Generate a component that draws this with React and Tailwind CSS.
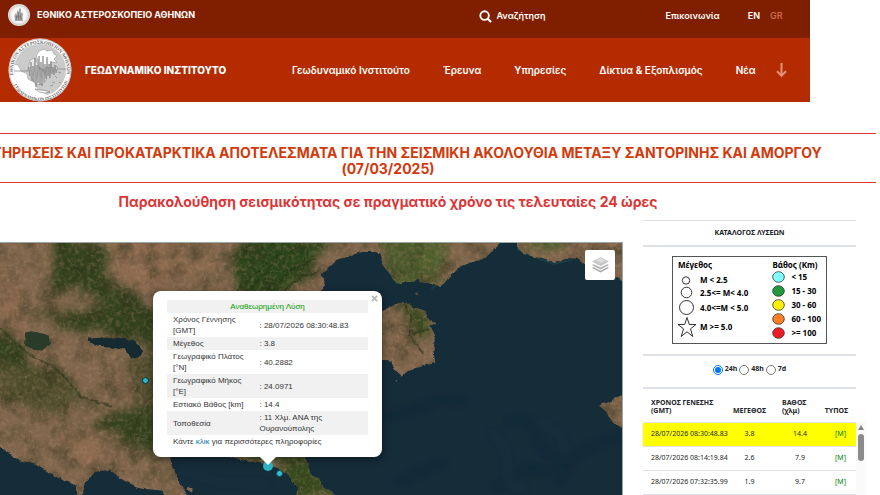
import { useState } from 'react';

const NAV = ['Γεωδυναμικό Ινστιτούτο', 'Έρευνα', 'Υπηρεσίες', 'Δίκτυα & Εξοπλισμός', 'Νέα'];

const SOLUTION = [
  ['Χρόνος Γέννησης [GMT]', '28/07/2026 08:30:48.83'],
  ['Μέγεθος', '3.8'],
  ['Γεωγραφικό Πλάτος [°N]', '40.2882'],
  ['Γεωγραφικό Μήκος [°E]', '24.0971'],
  ['Εστιακό Βάθος [km]', '14.4'],
  ['Τοποθεσία', '11 Χλμ. ΑΝΑ της Ουρανούπολης'],
];

const EVENTS = [
  { time: '28/07/2026 08:30:48.83', mag: '3.8', depth: '14.4' },
  { time: '28/07/2026 08:14:19.84', mag: '2.6', depth: '7.9' },
  { time: '28/07/2026 07:32:35.99', mag: '1.9', depth: '9.7' },
];

const DEPTHS = [
  ['#80ffff', '< 15'],
  ['#1f9a3d', '15 - 30'],
  ['#fff200', '30 - 60'],
  ['#ff7f27', '60 - 100'],
  ['#ed1c24', '>= 100'],
];

function Seal({ className }) {
  return (
    <svg viewBox="0 0 64 64" className={className} aria-hidden="true">
      <circle cx="32" cy="32" r="31.5" fill="#fff" />
      <circle cx="32" cy="32" r="31" fill="none" stroke="#999" strokeWidth="0.6" />
      <clipPath id="disc"><circle cx="32" cy="32" r="26" /></clipPath>
      <circle cx="32" cy="32" r="26" fill="#cbcbcb" />
      <g clipPath="url(#disc)">
        <path d="M4 26l6 1 3 6 6 3 1 5 6 3 4 7 7 4 6 6-8 4H4z" fill="#fff" stroke="#999" strokeWidth="0.5" />
        <path d="M31 13l5-2 3 2 5-1 2 4 3 2-3 3 3 4-5-1-3 3 2 3-5-1-2 3-4-2-3-4 1-4-2-4z" fill="#fff" stroke="#888" strokeWidth="0.5" />
        <path d="M22 22l4-2 3 4 2 6 5 4 3 6-3 5-5 2-5-3-4-7-2-7z" fill="#e8e8e8" stroke="#888" strokeWidth="0.5" />
        <path d="M27 51l5 1 5 .5 5 1.500-5 1-6-1zM47 38l2 2M44 44l3 1M51 44l2 1M48 28l2 2M50 34l3 1M42 48l3-1" fill="#fff" stroke="#777" strokeWidth="0.6" />
        <path d="M5 33h15l1-4 1 9 1-14 1 19 1-15 1 16 1-24 1 29 1-22 1 18 1-27 1 29 1-23 1 24 1-30 1 26 1-18 1 15 1-22 1 19 1-12 1 14 1-17 1 13 1-7 1 8 1-10 1 8 1-4h13" fill="none" stroke="#808080" strokeWidth="0.7" />
      </g>
      <path id="ringTop" d="M6 40A27 27 0 1 1 58 40" fill="none" />
      <path id="ringBottom" d="M4 43A29.800 29.800 0 0 0 60 43" fill="none" />
      <g fontFamily="Liberation Serif, serif" fontWeight="bold" fill="#666">
        <text fontSize="4.800">
          <textPath href="#ringTop" startOffset="3%">ΕΘΝΙΚΟΝ ΑΣΤΕΡΟΣΚΟΠΕΙΟΝ ΑΘΗΝΩΝ</textPath>
        </text>
        <text fontSize="4.300">
          <textPath href="#ringBottom" startOffset="6%">ΓΕΩΔΥΝΑΜΙΚΟΝ ΙΝΣΤΙΤΟΥΤΟΝ</textPath>
        </text>
      </g>
    </svg>
  );
}

function SmallSeal() {
  return (
    <svg viewBox="0 0 22 22" className="size-[22px]" aria-hidden="true">
      <circle cx="11" cy="11" r="11" fill="#e9e9e9" />
      <circle cx="11" cy="11" r="9.800" fill="none" stroke="#bdbdbd" strokeWidth="1.200" strokeDasharray="1 0.7" />
      <circle cx="11" cy="11" r="8.200" fill="#fafafa" stroke="#ccc" strokeWidth="0.4" />
      <path d="M7 17l-.5-5 1-3 1 2 .5-4 1-1 .5 3 1-5 1.500 1v4l1-1 1 2-.5 3 .5 4z" fill="#a5a5a5" />
      <path d="M8 16l1-5M10.500 16V8M13 16l-.5-6M7.500 13h6" stroke="#666" strokeWidth="0.6" fill="none" />
    </svg>
  );
}

function Header() {
  return (
    <header className="mr-[8%] shrink-0 text-white">
      <div className="flex h-[38px] items-start bg-[#801e00] pr-[27px] pl-2 text-[9px] font-semibold">
        <a href="#noa" className="mt-1 flex items-center gap-[7px] font-bold">
          <SmallSeal />
          ΕΘΝΙΚΟ ΑΣΤΕΡΟΣΚΟΠΕΙΟ ΑΘΗΝΩΝ
        </a>
        <div className="ml-auto flex h-8 items-center">
          <button className="mr-[120px] flex items-center gap-1">
            <svg viewBox="0 0 14 14" className="size-[13px]" fill="none" stroke="#fff" strokeWidth="2">
              <circle cx="6" cy="6" r="4.600" />
              <path d="M9.400 9.400l3.600 3.600" strokeWidth="2.400" />
            </svg>
            Αναζήτηση
          </button>
          <a href="#contact" className="mr-7">Επικοινωνία</a>
          <a href="#en" className="mr-[10px]">EN</a>
          <a href="#gr" className="text-[#c96a4c]">GR</a>
        </div>
      </div>
      <div className="flex h-16 items-center bg-[#b42b00] pr-[23px] pl-2">
        <Seal className="size-16 shrink-0" />
        <a href="#gein" className="ml-[13px] text-[10px] font-extrabold whitespace-nowrap">ΓΕΩΔΥΝΑΜΙΚΟ ΙΝΣΤΙΤΟΥΤΟ</a>
        <nav className="ml-auto flex gap-[33px] text-[10px] font-semibold whitespace-nowrap">
          {NAV.map((item) => (
            <a key={item} href="#nav">{item}</a>
          ))}
        </nav>
        <button aria-label="Περισσότερα" className="ml-5">
          <svg viewBox="0 0 11 14" className="h-[14px] w-[11px]" fill="none" stroke="#e29479" strokeWidth="2">
            <path d="M5.500 0v12.500M1 8.300l4.500 4.500L10 8.300" />
          </svg>
        </button>
      </div>
    </header>
  );
}

function Terrain() {
  return (
    <svg viewBox="0 0 623 253" preserveAspectRatio="xMinYMin slice" className="block h-full w-full" aria-hidden="true">
      <defs>
        <filter id="coast" filterUnits="userSpaceOnUse" x="-20" y="-20" width="663" height="293">
          <feTurbulence type="fractalNoise" baseFrequency="0.12" numOctaves="3" seed="4" />
          <feDisplacementMap in="SourceGraphic" scale="5" xChannelSelector="R" yChannelSelector="G" />
        </filter>
        <filter id="soft" filterUnits="userSpaceOnUse" x="-20" y="-20" width="663" height="293" colorInterpolationFilters="sRGB">
          <feTurbulence type="fractalNoise" baseFrequency="0.045" numOctaves="4" seed="9" result="n" />
          <feDisplacementMap in="SourceGraphic" in2="n" scale="36" xChannelSelector="R" yChannelSelector="G" result="d" />
          <feGaussianBlur in="d" stdDeviation="5" />
        </filter>
        <filter id="relief" x="0" y="0" width="100%" height="100%" colorInterpolationFilters="sRGB">
          <feTurbulence type="fractalNoise" baseFrequency="0.05" numOctaves="5" seed="21" />
          <feColorMatrix values="0 0 0 0 0.16  0 0 0 0 0.18  0 0 0 0 0.09  2 0 0 0 -0.85" />
        </filter>
        <filter id="grain" x="0" y="0" width="100%" height="100%" colorInterpolationFilters="sRGB">
          <feTurbulence type="fractalNoise" baseFrequency="0.25" numOctaves="3" seed="5" />
          <feColorMatrix values="0 0 0 0 0.72  0 0 0 0 0.58  0 0 0 0 0.44  0 1.6 0 0 -0.7" />
        </filter>
        <filter id="swell" x="-10%" y="-10%" width="120%" height="120%">
          <feGaussianBlur stdDeviation="3" />
        </filter>
        <clipPath id="land">
          <path d="M-16 -16H300H500L500 1 492 10 487 15 470 20 460 24 450 33 441 44 432 41 420 37 408 38 398 41 393 34 383 20 380 9 362 9 345 14 337 17 330 23 322 33 326 41 320 50 320 150 172 150 170 218 178 237 188 253V268H166L163 248 150 247 137 244 124 238 110 227 95 229 84 243 82 268H78L76 243 62 237 48 229 36 221 18 217 5 207 0 203 -16 190Z" />
          <path d="M517 -16H640V48L623 38 607 30 592 27 580 16 571 15 555 19 540 14 524 10 518 5Z" />
          <path d="M370 73l12-5 9-4 13-6 9 6 11 3 5 9 8 4-6 3 5 10-2 15 2 12-11 3-15 4-8 6-7-7-3-8-22-2Z" />
          <path d="M600 163l8-3 8-5 24-7v43l-17-7-9-4-6-10Z" />
          <path d="M215 206H303l3 10 6 14 10 12 15 11 5 15H291l5-15 1-7-5-10-12-10-14-4-10-4-12 0-12-4Z" />
          <path d="M416 50l4 1-1 2-3-1zM396 136l2 1-1 1zM189 244l4 2-1 4-4-2z" />
        </clipPath>
      </defs>
      <rect width="623" height="253" fill="#152c39" />
      <g filter="url(#swell)" fill="none" stroke="#0c2236" strokeWidth="4" opacity="0.45">
        <path d="M385 174l30-7 26-10 24 2M400 240l26-14 20-6M496 246l30-20 24 2 20-12M560 240l14-26 22-12 27-8M508 180q24-10 30 14t26 18" />
        <path d="M490 190q20 10 18 34t18 20M540 180q24 6 26 30M180 228l40 12 50 2" stroke="#1b3646" />
      </g>
      <path d="M383 20l15 21M432 46l28-22 27-12 14-12M518 6l22 10 15 5 18-4" fill="none" stroke="#1c5052" strokeWidth="2" opacity="0.5" />
      <g filter="url(#coast)">
        <g clipPath="url(#land)">
          <rect x="-20" y="-20" width="663" height="293" fill="#80664d" />
          <g filter="url(#soft)">
            <path d="M50 -10L95 0 112 30 108 52 78 56 55 40ZM100 40L150 60 165 110 120 95 70 88 55 76 95 65ZM-10 95L20 100 60 130 95 155 60 160 20 140 -10 125ZM95 170L155 155 170 215 125 205 90 185Z" fill="#33421f" />
            <path d="M0 120L50 128 80 155 70 170 40 168 0 155ZM125 120L165 100 165 160 135 155ZM140 10L190 6 200 18 150 24ZM20 60L80 75 50 80Z" fill="#524f2f" />
            <path d="M245 -10H345L320 16 295 50H236L238 25ZM290 -10H325V18Z" fill="#2c451d" />
            <path d="M378 -10H450L442 40 396 42 380 20ZM525 -10H560V10L530 12Z" fill="#50602f" />
            <path d="M400 60L425 68 432 92 412 98 404 84ZM230 205H310L345 260H296L270 220Z" fill="#384b1f" />
            <path d="M0 20L24 50 20 90 0 80ZM60 190L100 195 110 220 80 225ZM95 0L180 0 220 30 150 45 110 20Z" fill="#8d6b50" />
          </g>
          <g fill="none" stroke="#1b2e13" strokeWidth="2" opacity="0.5">
            <path d="M232 52l34-30 8-18M246 50l24-24 10-16M262 52l34-28 22-8M280 52l22-18 18-6M0 86l28 24 30 18 24 26 30 10M404 60l8 14-2 18 14 18M412 92l18-6" />
          </g>
          <rect x="-20" y="-20" width="663" height="293" filter="url(#relief)" opacity="0.6" />
          <rect x="-20" y="-20" width="663" height="293" filter="url(#grain)" opacity="0.5" />
        </g>
      </g>
      <g filter="url(#coast)">
        <path d="M25 91l10-2 15 4 1 8-8 7-10-2-9-5Z" fill="#2b3b2b" />
        <path d="M88 95l12-1 12 3 12-2 10 3 10 11-2 4-12 3-4-9-12-3-16-1-9-4Z" fill="#142a31" />
      </g>
    </svg>
  );
}

function Popup() {
  return (
    <div className="absolute top-12 left-[153px] w-[229px] rounded-lg bg-white px-[14px] py-[9px] text-[8px] leading-[11px] text-[#333] shadow-[0_2px_8px_rgba(0,0,0,0.45)]">
      <button aria-label="Κλείσιμο" className="absolute top-1 right-1">
        <svg viewBox="0 0 8 8" className="size-[7px]" stroke="#b8b8b8" strokeWidth="2">
          <path d="M1 1l6 6M7 1L1 7" />
        </svg>
      </button>
      <table className="w-full table-fixed">
        <colgroup>
          <col className="w-[43%]" />
          <col />
        </colgroup>
        <tbody>
          <tr className="bg-[#f1f1f1]">
            <th colSpan={2} className="px-[6px] py-px text-center font-normal text-[#009900]">Αναθεωρημένη Λύση</th>
          </tr>
          {SOLUTION.map(([label, value]) => (
            <tr key={label} className="even:bg-white odd:bg-[#f1f1f1]">
              <td className="py-px pl-[6px]">{label}</td>
              <td className="py-px pl-[6px] pr-1">: {value}</td>
            </tr>
          ))}
          <tr>
            <td colSpan={2} className="px-[6px] py-px">
              Κάντε <a href="#solution" className="text-[#0078a8]">κλικ</a> για περισσότερες πληροφορίες
            </td>
          </tr>
        </tbody>
      </table>
      <svg viewBox="0 0 16 8" className="absolute top-full left-1/2 h-2 w-4 -translate-x-1/2" aria-hidden="true">
        <path d="M0 0h16L8 8z" fill="#fff" />
      </svg>
    </div>
  );
}

function MapView() {
  return (
    <div className="relative mt-[22px] min-w-0 flex-1 overflow-hidden border-t border-r border-[#9aa5a5] font-['Liberation_Sans',Arial,sans-serif]">
      <Terrain />
      <span className="absolute top-[134px] left-[142px] size-[7px] rounded-full border border-[#0b2a38] bg-[#2fb9cb]" />
      <span className="absolute top-[218px] left-[263px] size-[10px] rounded-full bg-[#2fb4c4]" />
      <span className="absolute top-[227px] left-[276px] size-[7px] rounded-full border border-[#16495a] bg-[#2fc2d2]" />
      <Popup />
      <button aria-label="Επίπεδα" className="absolute top-[7px] right-[7px] flex size-[30px] items-center justify-center rounded-xs bg-white">
        <svg viewBox="0 0 20 19" className="h-[18px] w-[19px]">
          <path d="M1 12.500L10 8l9 4.500-9 5z" fill="#a6a6a6" />
          <path d="M1 10.800L10 6l9 4.800-9 4.800z" fill="#fff" />
          <path d="M1 9.500L10 5l9 4.500-9 4.800z" fill="#adadad" />
          <path d="M1 7.800L10 3l9 4.800-9 4.300z" fill="#fff" />
          <path d="M1 5.800L10 1l9 4.800-9 4.900z" fill="#c8c8c8" />
          <path d="M5 4.500L10 2l5 2.500-5 2.500z" fill="#dedede" />
        </svg>
      </button>
    </div>
  );
}

function Legend() {
  return (
    <div className="mx-auto flex h-[88px] w-[155px] justify-between border border-[#555] px-[5px] pt-[3px] text-[8px] leading-[10px] font-bold text-black">
      <div>
        <div>Μέγεθος</div>
        <ul className="grid grid-cols-[18px_auto] items-center gap-x-1 pt-1">
          <li className="contents">
            <svg viewBox="0 0 18 12" className="h-3 w-[18px]" fill="none" stroke="#333"><circle cx="8" cy="6.500" r="3.700" /></svg>
            <span>M &lt; 2.5</span>
          </li>
          <li className="contents">
            <svg viewBox="0 0 18 13" className="h-[13px] w-[18px]" fill="none" stroke="#333"><circle cx="8.500" cy="6.500" r="5.300" /></svg>
            <span>2.5&lt;= M&lt; 4.0</span>
          </li>
          <li className="contents">
            <svg viewBox="0 0 18 17" className="h-[17px] w-[18px]" fill="none" stroke="#333"><circle cx="8.500" cy="8.500" r="7" /></svg>
            <span>4.0&lt;=M &lt; 5.0</span>
          </li>
          <li className="contents">
            <svg viewBox="0 0 18 22" className="h-[22px] w-[18px]" fill="none" stroke="#333"><path d="M9 1.500l2.300 7H18l-5.500 4.300 2.300 7.700L9 15.800 3.200 20.500l2.300-7.700L0 8.500h6.700z" /></svg>
            <span>M &gt;= 5.0</span>
          </li>
        </ul>
      </div>
      <div>
        <div>Βάθος (Km)</div>
        <ul>
          {DEPTHS.map(([color, label]) => (
            <li key={label} className="flex h-[14px] items-center gap-[6px]">
              <svg viewBox="0 0 13 12" className="h-3 w-[13px]"><ellipse cx="6.500" cy="6" rx="5.800" ry="5.300" fill={color} stroke="#333" strokeWidth="0.8" /></svg>
              {label}
            </li>
          ))}
        </ul>
      </div>
    </div>
  );
}

function Sidebar() {
  const [range, setRange] = useState('24h');
  return (
    <aside className="flex w-[223px] shrink-0 flex-col font-['Noto_Sans','Open_Sans',sans-serif] text-[7px] text-[#212529]">
      <div className="mr-[10px] border-t border-[#dee2e6]">
        <h3 className="flex h-6 items-center justify-center font-bold">ΚΑΤΑΛΟΓΟΣ ΛΥΣΕΩΝ</h3>
        <div className="border-y-2 border-[#dee2e6] pt-[9px] pb-[10px]">
          <Legend />
        </div>
        <fieldset className="flex h-[31px] items-center justify-center gap-[2px] pb-1 font-bold">
          {['24h', '48h', '7d'].map((r) => (
            <label key={r} className="flex items-center gap-[2px]">
              <input type="radio" name="range" checked={range === r} onChange={() => setRange(r)} className="size-[10px]" />
              {r}
            </label>
          ))}
        </fieldset>
      </div>
      <div className="flex min-h-0 flex-1">
        <div className="min-w-0 flex-1">
          <table className="w-full table-fixed">
            <thead>
              <tr className="h-[34px] border-t-2 border-b border-[#dee2e6] text-left align-bottom leading-[8px]">
                <th className="w-[82px] pb-[7px] pl-2">ΧΡΟΝΟΣ ΓΕΝΕΣΗΣ (GMT)</th>
                <th className="w-[49px] pb-[7px] text-center">ΜΕΓΕΘΟΣ</th>
                <th className="w-[44px] pr-1 pb-[7px] pl-2">ΒΑΘΟΣ (χλμ)</th>
                <th className="pr-2 pb-[7px] text-right">ΤΥΠΟΣ</th>
              </tr>
            </thead>
            <tbody>
              {EVENTS.map((e, i) => (
                <tr key={e.time} className={`h-6 border-b border-[#dee2e6] whitespace-nowrap ${i === 0 ? 'bg-[#ffff00]' : 'bg-white'}`}>
                  <td className="pl-2">{e.time}</td>
                  <td className="text-center">{e.mag}</td>
                  <td className="pl-2 text-center">{e.depth}</td>
                  <td className="pr-[10px] text-right"><a href="#type" className="text-[#008000]">[M]</a></td>
                </tr>
              ))}
            </tbody>
          </table>
        </div>
        <div className="mt-[34px] flex w-[10px] flex-col items-center bg-[#fafafa] pt-1">
          <svg viewBox="0 0 6 5" className="h-[5px] w-[6px]"><path d="M3 0l3 5H0z" fill="#858585" /></svg>
          <div className="mt-1 h-[27px] w-[6px] rounded-full bg-[#8b8b8b]" />
        </div>
      </div>
    </aside>
  );
}

export default function App() {
  return (
    <div className="flex h-screen flex-col overflow-hidden bg-white font-['Inter','Open_Sans',sans-serif]">
      <Header />
      <main className="mr-1 flex min-h-0 flex-1 flex-col">
        <h1 className="mt-[31px] -ml-[100px] border-t border-b border-t-[#dd3333] border-b-[#dd3333] px-10 pt-[11px] pb-[5px] text-center text-[14px] leading-4 font-bold text-[#d23a0c]">
          ΠΑΡΑΤΗΡΗΣΕΙΣ ΚΑΙ ΠΡΟΚΑΤΑΡΚΤΙΚΑ ΑΠΟΤΕΛΕΣΜΑΤΑ ΓΙΑ ΤΗΝ ΣΕΙΣΜΙΚΗ ΑΚΟΛΟΥΘΙΑ ΜΕΤΑΞΥ ΣΑΝΤΟΡΙΝΗΣ ΚΑΙ ΑΜΟΡΓΟΥ (07/03/2025)
        </h1>
        <h2 className="mt-[9px] -ml-[100px] text-center text-[14px] leading-5 font-bold text-[#dc3535]">
          Παρακολούθηση σεισμικότητας σε πραγματικό χρόνο τις τελευταίες 24 ώρες
        </h2>
        <div className="mt-2 flex min-h-0 flex-1 gap-5 pr-[10px]">
          <MapView />
          <Sidebar />
        </div>
      </main>
    </div>
  );
}
